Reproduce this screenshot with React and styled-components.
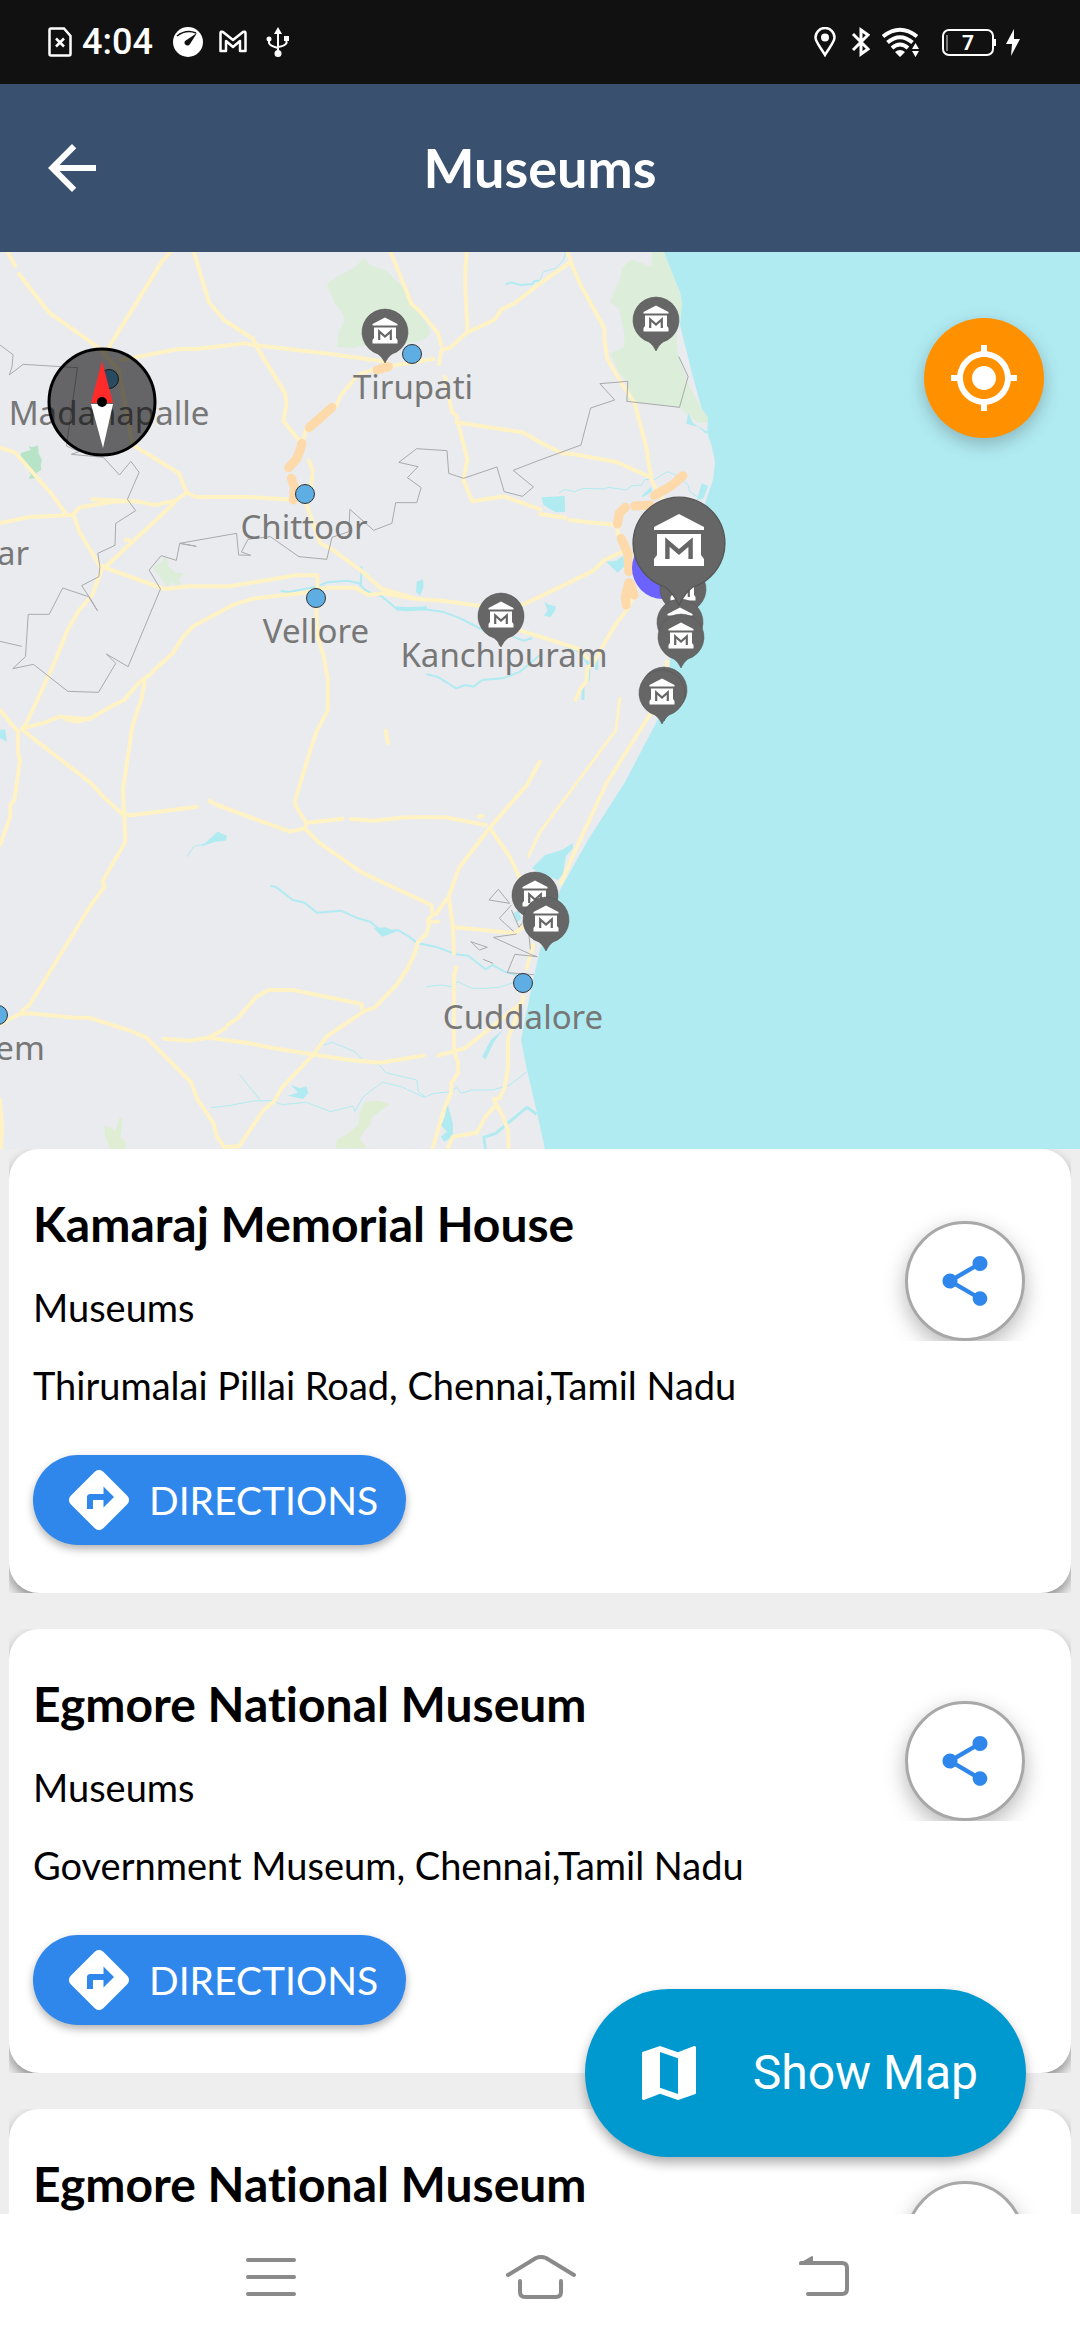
import React from "react";
import styled, { createGlobalStyle } from "styled-components";
import { MdArrowBack, MdDirections, MdMap, MdMyLocation, MdShare } from "react-icons/md";

const GlobalStyle = createGlobalStyle`
  * { box-sizing: border-box; }
  body { margin: 0; background: #eeeeee; }
  h1, h2, p, ul { margin: 0; padding: 0; }
  button { border: 0; margin: 0; padding: 0; font: inherit; cursor: pointer; }
  svg { display: block; flex: none; }
`;

const Screen = styled.div`
  display: flex;
  flex-direction: column;
  height: 100vh;
  color: #000;
  font-family: Lato, "Open Sans", sans-serif;
  font-variant-ligatures: none;
`;

const StatusBar = styled.div`
  display: flex;
  flex: none;
  align-items: center;
  justify-content: space-between;
  height: 84px;
  padding: 0 60px 0 48px;
  background: #111111;
  color: #fff;
`;

const StatusGroup = styled.div`
  display: flex;
  align-items: center;
  gap: ${(p) => p.$gap}px;
`;

const Clock = styled.span`
  font-family: Roboto, sans-serif;
  font-size: 36px;
  font-weight: 500;
  line-height: 44px;
`;

const AppBar = styled.header`
  display: grid;
  flex: none;
  grid-template-columns: 144px 1fr 144px;
  align-items: center;
  height: 168px;
  background: #39516f;
  color: #fff;
`;

const BackButton = styled.button`
  display: flex;
  align-items: center;
  height: 144px;
  padding-left: 36px;
  background: none;
  color: inherit;
`;

const AppTitle = styled.h1`
  font-size: 54px;
  font-weight: 700;
  line-height: 66px;
  text-align: center;
`;

const Content = styled.main`
  position: relative;
  display: flex;
  flex: 1;
  flex-direction: column;
  min-height: 0;
  overflow: hidden;
`;

const MapPane = styled.section`
  position: relative;
  flex: none;
  height: 897px;
  background: #e9ebee;
`;

const MapCanvas = styled.svg`
  width: 100%;
  height: 100%;
`;

const Shape = styled.path`
  fill: ${(p) => p.$fill || "none"};
  stroke: ${(p) => p.$stroke || "none"};
  stroke-width: ${(p) => p.$width || 0}px;
  stroke-linejoin: round;
  stroke-linecap: ${(p) => p.$cap || "butt"};
  vector-effect: non-scaling-stroke;
`;

const CityName = styled.text`
  fill: #777777;
  font-family: "Noto Sans", "Open Sans", sans-serif;
  font-size: 33px;
  text-anchor: middle;
`;

const LocateButton = styled.button`
  position: absolute;
  top: 66px;
  right: 36px;
  display: flex;
  align-items: center;
  justify-content: center;
  width: 120px;
  height: 120px;
  border-radius: 50%;
  background: #ff9100;
  color: #fff;
  box-shadow: 0 6px 18px rgba(0, 0, 0, 0.24);
`;

const PlaceList = styled.ul`
  display: flex;
  flex: none;
  flex-direction: column;
  gap: 36px;
  padding: 0 9px;
  list-style: none;
`;

const PlaceItem = styled.li`
  overflow: hidden;
`;

const Card = styled.article`
  display: flex;
  align-items: flex-start;
  justify-content: space-between;
  padding: 46px 22px 48px 24px;
  border-radius: 30px;
  background: #fff;
  box-shadow: 0 6px 12px rgba(0, 0, 0, 0.4);
`;

const CardBody = styled.div`
  display: flex;
  flex-direction: column;
  align-items: flex-start;
  gap: 30px;
`;

const PlaceName = styled.h2`
  font-size: 48px;
  font-weight: 700;
  line-height: 58px;
`;

const PlaceText = styled.p`
  font-size: 38px;
  line-height: 48px;
`;

const DirectionsButton = styled.button`
  display: flex;
  align-items: center;
  gap: 14px;
  height: 90px;
  margin-top: 16px;
  padding: 0 28px 0 30px;
  border-radius: 45px;
  background: #2f87ec;
  color: #fff;
  font-size: 39px;
  line-height: 48px;
  box-shadow: 0 4px 9px rgba(0, 0, 0, 0.3);
`;

const ShareArea = styled.div`
  padding: 26px 24px 0;
  overflow: hidden;
`;

const ShareButton = styled.button`
  display: flex;
  align-items: center;
  justify-content: center;
  width: 120px;
  height: 120px;
  border: 3px solid #a8a8a8;
  border-radius: 50%;
  background: #fff;
  color: #2f87ec;
  box-shadow: 0 8px 21px rgba(0, 0, 0, 0.28);
`;

const ShowMapButton = styled.button`
  position: absolute;
  right: 54px;
  bottom: 57px;
  display: flex;
  align-items: center;
  gap: 48px;
  height: 168px;
  padding: 0 48px;
  border-radius: 84px;
  background: #0099cf;
  color: #fff;
  font-family: Roboto, sans-serif;
  font-size: 48px;
  line-height: 56px;
  box-shadow: 0 6px 12px rgba(0, 0, 0, 0.32);
`;

const NavBar = styled.nav`
  display: grid;
  flex: none;
  grid-template-columns: repeat(3, 1fr);
  height: 126px;
  padding: 0 12.5%;
  background: #fff;
`;

const NavButton = styled.button`
  display: flex;
  align-items: center;
  justify-content: center;
  background: none;
`;

const roadsNorth = [
  "M20 0L44 48M55 72L143 188L285 292L345 360L385 585L520 670L542 728L570 741H725L855 750",
  "M495 6L470 35L312 298L300 310",
  "M350 330L520 297H568L715 280",
  "M563 6L607 157L650 210L735 267L745 290L828 430L832 462L823 513L872 575",
  "M722 283L960 312L1120 335",
  "M1050 370L1120 350L1258 327M1040 375L990 435L975 470M1130 0L1140 20L1195 162L1225 190L1272 250L1281 285",
  "M1568 100L1494 160L1457 178L1435 210L1355 248L1308 292L1282 300L1275 342M1355 6L1350 90L1358 248",
  "M1292 380L1312 485L1325 497L1357 628L1346 690L1371 754L1463 739L1568 778M1325 517L1517 547L1568 577",
  "M0 593L44 608L140 720M145 725L190 790M0 819L85 801L210 795L232 772L330 755L390 753L450 765L510 752L542 728M268 748L360 752",
  "M213 795L232 848L290 948L306 951L505 760",
  "M365 870H375M300 951L477 1017L548 1009H665L860 976H922V1013M298 950L268 1035L230 1080L200 1133M196 1140L155 1245L108 1350",
  "M360 1350L404 1297L440 1270M445 1262L503 1208L530 1163L562 1128L680 1063L735 1046L875 1030L950 1013H1030L1070 1035L1110 1030L1210 1047",
  "M410 1350L420 1295M897 632L908 662M907 672L900 740M885 750L930 880L960 895L1050 963L1106 1015L1210 1047L1285 1052L1395 1068M1515 1065L1568 1040M1510 1142L1568 1160",
  "M918 1065L922 1160L940 1220L952 1285V1350M880 575L888 540",
];

const roadsCoast = [
  "M80 6L93 45L115 100L187 235V258M186 265L196 328L237 400L275 460L313 610M312 617L324 690L345 735L355 745M0 100L87 38",
  "M0 577L63 610L95 612L222 636L322 682M0 792L73 803M85 810L130 815M138 817L195 822L225 825V850L235 870",
  "M0 1040L155 962L187 930L240 905M268 1045L255 1075L215 1130L170 1210L155 1240L137 1255L135 1295L118 1315L103 1350M0 1160L112 1197L137 1225",
];

const roadsSouth = [
  "M0 30L52 95V155L58 180L42 300L30 315V350L0 435M108 0L75 72L63 86L130 68L172 50L258 58L330 15L362 0M190 58L228 65L258 55",
  "M63 88L265 250L300 290L355 342L382 346L572 320M410 0L385 75L357 268L364 425L298 543L303 560L262 618L85 915L65 933",
  "M0 972L55 943L85 940L215 953H258L372 990M380 993L425 1013L555 1147L572 1195L620 1270L630 1310L652 1342L695 1338L765 1230L797 1203L818 1163L910 1063L950 1008L1060 932L1088 923L1155 850L1185 802L1205 758L1213 727L1238 702L1246 675",
  "M608 302L630 315L842 395L885 385L890 368L995 356M1018 357L1085 362L1180 352H1293L1410 375M890 370L857 315V300L897 165L918 98L952 30V0M885 385L925 427L1050 517L1252 615L1257 645L1243 657V672",
  "M1568 185L1530 255L1423 382L1332 505L1303 590L1266 642M1423 385L1480 470L1510 535M1303 590L1315 680L1318 760M1315 681L1495 700L1520 680M1252 665H1272",
  "M1548 735L1530 805M1520 890L1515 910L1475 1015V1105L1465 1165L1450 1195L1435 1197L1440 1215L1410 1250L1385 1298L1315 1310L1298 1350M1440 1210L1458 1245M1460 1248L1475 1290L1477 1350",
  "M1325 802L1318 830V1050L1325 1075M1330 1083V1120L1310 1150V1178L1290 1225L1255 1350M1515 908L1350 1045L1273 1066M1230 1067L1103 1088L1015 1080L905 1063L780 1042L725 1030L605 1013L550 1022L475 1016M605 1013L655 985M660 975L690 955L745 890L780 870H850L1050 912V925",
  "M1120 92L1127 130M1390 350L1402 348M0 1200L6 1290L3 1350",
];

const highways = [
  "M1095 360L1128 350",
  "M964 472L898 533",
  "M877 580L870 605L860 628L838 653",
  "M846 685L855 712L852 750",
];

const cityHighways = [
  "M415 677L385 705L332 737",
  "M320 765L275 768M248 772L230 790L225 822",
  "M236 865L255 910L258 965",
  "M258 998L248 1040L250 1065M262 1000L273 1035",
];

const borders = [
  "M0 285L38 314L35 350L27 375L67 343L225 353L193 588L230 605L207 613L300 622L347 675L380 634L404 667L370 748L394 782L336 820L334 886L284 910L290 950L287 980L237 1007L262 1045L283 1082L257 1040L182 1014L143 1093H82L74 1220L37 1256L97 1243L197 1324L286 1327L336 1240L309 1212L372 1250L466 1017L433 960L468 917L512 931L522 880L570 889L522 880L687 850L693 915L728 916L701 906L720 868L785 860L868 920L949 928L964 862L1013 845L1016 778L1085 841L1138 820L1149 758H1210L1223 713L1183 683L1214 650L1158 637L1210 596L1298 602L1303 670L1346 685L1443 651L1464 725L1517 739L1549 711L1490 661L1568 630",
  "M0 1174L63 1189",
];

const rivers = [
  "M1468 103L1485 97L1510 105L1545 102L1552 93L1568 92M815 1023L840 1026L880 1018L920 1010L950 997L1010 992L1042 1000L1060 1020L1080 1030L1110 1040L1150 1075L1210 1075L1285 1085L1330 1102L1375 1125L1420 1150M1490 1160L1520 1172L1545 1165M1050 950L1047 1010M1238 1273L1270 1280L1325 1315L1350 1305L1375 1310L1400 1290L1460 1285L1510 1265L1568 1215",
];

const riversSouth = [
  "M785 558L800 560L850 600L885 608L920 638L990 632L1040 655L1075 665L1110 695L1155 690L1185 708L1213 730L1265 740L1325 763L1360 767L1410 808L1430 795L1465 815L1500 825",
  "M1238 860L1280 855L1310 860L1330 845L1370 865L1410 865L1450 862L1490 848",
  "M612 1223L665 1217L735 1203L790 1202L820 1214L890 1207L960 1235L1025 1218L1030 1235L1055 1190L1110 1147L1165 1160L1232 1192L1260 1180L1310 1175L1325 1162L1340 1180L1370 1170L1430 1170L1480 1155L1530 1115",
  "M695 1123L755 1200M940 1035L965 1027L1030 1055L1060 1085L1100 1093L1120 1118L1210 1140L1215 1175L1235 1190M543 470L562 440L600 430L640 405",
  "M1410 1350L1405 1312L1440 1300L1480 1265L1530 1222L1558 1243",
];

const cities = [
  { x: 412, y: 102 },
  { x: 305, y: 242 },
  { x: 316, y: 346 },
  { x: 109, y: 127 },
  { x: -2, y: 763 },
  { x: 523, y: 731 },
];

const cityNames = [
  { name: "Tirupati", x: 413, y: 147 },
  { name: "Madanapalle", x: 109, y: 173 },
  { name: "Chittoor", x: 304, y: 287 },
  { name: "Vellore", x: 316, y: 391 },
  { name: "Kanchipuram", x: 504, y: 415 },
  { name: "Cuddalore", x: 523, y: 777 },
  { name: "ar", x: 13, y: 313 },
  { name: "em", x: 20, y: 808 },
];

const pins = [
  { x: 385, y: 80 },
  { x: 656, y: 68 },
  { x: 501, y: 364 },
  { x: 683, y: 337 },
  { x: 680, y: 370 },
  { x: 681, y: 385 },
  { x: 664, y: 438 },
  { x: 662, y: 441 },
  { x: 535, y: 643 },
  { x: 546, y: 668 },
  { x: 679, y: 291, size: 2 },
];

function MuseumPin({ x, y, size = 1 }) {
  return (
    <g transform={`translate(${x} ${y}) scale(${size})`}>
      <path
        d="M-7 22C-4 24 -2 27 0 31C2 27 4 24 7 22A23 23 0 1 0 -7 22Z"
        fill="#666666"
        stroke="#555555"
        strokeWidth=".6"
      />
      <path d="M0 -14.500L12.500 -8V-6.500H-12.500V-8Z" fill="#fff" />
      <path d="M-11 -4.500H11V6L12.500 8V11.500H-12.500V8L-11 6Z" fill="#fff" />
      <path d="M-5.800 8V-.5L0 4.500L5.800 -.5V8" fill="none" stroke="#666666" strokeWidth="2.200" />
    </g>
  );
}

function Compass() {
  return (
    <g transform="translate(102 150)">
      <circle r="53" fill="#000" fillOpacity=".57" stroke="#000" strokeWidth="3" />
      <path d="M0 -41L11 1H-11Z" fill="#ff2a2a" />
      <path d="M-11 2H11L1 46Z" fill="#fff" />
      <circle r="5" />
    </g>
  );
}

const RoadSet = ({ lines, transform }) => (
  <g transform={transform}>
    {lines.map((d) => (
      <Shape key={d} d={d} $stroke="#fff2c5" $width={4} $cap="round" />
    ))}
  </g>
);

function RegionMap() {
  const north = "translate(0 -2) scale(.34438 .33333)";
  const coast = "translate(540 -2) scale(.34438 .33333)";
  const south = "translate(0 448) scale(.34438 .33333)";
  return (
    <MapCanvas viewBox="0 0 1080 897" preserveAspectRatio="xMinYMin slice" role="img" aria-label="Map of museums">
      <path
        d="M663 0L680 40L682 51L680 73L692 121L702 158L708 170L707 180L712 195L715 210L713 228L705 251L690 300L686 370L675 395L670 408L669 440L656 471L625 530L588 588L560 638L540 698L533 728L527 758L521 788L527 818L537 861L545 897H1080V0Z"
        fill="#b1ebf2"
      />
      <g transform={north}>
        <Shape
          $fill="#dceeda"
          d="M1060 22L1070 42L1122 63L1180 122L1200 165L1245 230L1250 250L1235 268L1190 280L1115 285L1045 288L1028 295L978 290L985 240L998 220V195L970 155L950 108L955 95L1035 48Z"
        />
        <Shape
          $fill="#b7e4c7"
          d="M82 588L95 592L110 586L112 610L122 630L118 645L120 660L107 668L102 685L82 686L90 675L80 655L58 628L62 608L90 600Z"
        />
        <Shape
          $fill="#dceeda"
          d="M474 920L485 925L490 948L510 968L537 970L518 987L526 1003L510 1005L500 998L483 1010L468 985L442 952L470 935Z"
        />
        <Shape $fill="#b1ebf2" d="M1210 995L1228 988L1230 1010L1220 1038L1208 1025Z" />
        {rivers.map((d) => (
          <Shape key={d} d={d} $stroke="#b1ebf2" $width={2} />
        ))}
        <Shape d="M1150 1075L1180 1078L1240 1075" $stroke="#b1ebf2" $width={4} />
      </g>
      <g transform={coast}>
        <Shape
          $fill="#dceeda"
          d="M325 6H360L405 125L413 160L405 220L396 240L400 310L425 390L465 470L487 500V518H460L430 495L405 472L252 452L255 395L230 370L205 310L245 290V255L230 175L203 157L235 80L237 55L265 28L325 50Z"
        />
        <Shape
          $fill="#b1ebf2"
          d="M5 742L30 740L72 738L73 785L45 787L10 765ZM192 935L222 932L240 918L250 945L225 968ZM12 1055L28 1065L45 1068V1080L30 1102L12 1097L22 1080ZM293 740L323 710L325 725L300 740ZM430 490L445 520L485 545L482 552L460 530L425 522ZM470 700L488 708L475 745L455 750Z"
        />
        <Shape
          $stroke="#b1ebf2"
          $width={1}
          d="M55 730L70 718L100 725L125 715L185 717L200 712L250 720L265 708L295 705L305 688L330 690L370 665L395 675L430 705L435 725L470 750M74 6L68 30L45 55L10 65L0 90"
        />
        <Shape $stroke="#b1ebf2" $width={3} d="M70 1185L118 1205L142 1245L140 1290L125 1310V1350M165 1215V1260" />
      </g>
      <g transform={south}>
        <Shape
          $fill="#dfeed3"
          d="M303 1278L320 1282L335 1293L348 1252L356 1255L350 1310L368 1330L362 1350H320L305 1305ZM1060 1205L1100 1202L1132 1212L1110 1230L1080 1250L1075 1275L1060 1290L1045 1315L1065 1345H975L978 1320L1010 1300L1040 1275L1045 1235Z"
        />
        <Shape
          $fill="#b1ebf2"
          d="M600 425L632 395L660 408L655 422L625 425L582 440ZM0 90L15 88L20 125L0 115ZM845 1155L870 1165L890 1158L895 1180L880 1197L835 1187L865 1178ZM1298 1205L1315 1270V1310L1290 1325L1280 1310L1298 1295L1280 1275L1292 1250ZM1460 990L1435 1025L1410 1078L1400 1070L1425 1020ZM1085 685L1120 682L1150 695L1110 710ZM1490 640L1505 632L1515 655L1500 668Z"
        />
        {riversSouth.map((d, i) => (
          <Shape key={d} d={d} $stroke="#b1ebf2" $width={i === 4 ? 3 : i === 0 ? 2 : 1} />
        ))}
      </g>
      <path d="M532 616L545 603L562 598L573 591V596L566 604L563 622L558 628L540 622Z" fill="#b1ebf2" />
      <RoadSet lines={roadsNorth} transform={north} />
      <RoadSet lines={roadsCoast} transform={coast} />
      <RoadSet lines={roadsSouth} transform={south} />
      <Shape d="M667 408L665 440L640 478L618 513L607 530L580 588L560 633" $stroke="#fff2c5" $width={4} />
      <Shape d="M620 445L616 478L540 580L528 605" $stroke="#fff2c5" $width={3} />
      <g transform={north}>
        {borders.map((d) => (
          <Shape key={d} d={d} $stroke="#a9aaac" $width={1} />
        ))}
        {highways.map((d) => (
          <Shape key={d} d={d} $stroke="#fed9a9" $width={9} $cap="round" />
        ))}
      </g>
      <g transform={coast}>
        <Shape
          d="M0 630L119 585L147 474L217 450L174 401L255 394L252 454L405 472L430 380L403 320"
          $stroke="#a9aaac"
          $width={1}
        />
        {cityHighways.map((d) => (
          <Shape key={d} d={d} $stroke="#fed9a9" $width={9} $cap="round" />
        ))}
      </g>
      <g transform={south}>
        <Shape
          d="M1447 568L1420 600L1480 610ZM1485 615L1450 655L1492 695M1485 630L1507 682L1515 670M1500 702L1433 712L1545 765L1560 770L1495 763L1473 818L1550 824M1540 748L1535 695M1367 725L1415 742L1392 750ZM1403 778L1432 790"
          $stroke="#a9aaac"
          $width={1}
        />
      </g>
      {cities.map((c) => (
        <circle key={`${c.x}-${c.y}`} cx={c.x} cy={c.y} r="9.500" fill="#5eaee3" stroke="#333" />
      ))}
      {cityNames.map((c) => (
        <CityName key={c.name} x={c.x} y={c.y}>
          {c.name}
        </CityName>
      ))}
      <circle cx="663" cy="316" r="31" fill="#6c63ff" />
      {pins.map((p) => (
        <MuseumPin key={`${p.x}-${p.y}`} {...p} />
      ))}
      <Compass />
    </MapCanvas>
  );
}

const SimIcon = () => (
  <svg width="24" height="30" viewBox="0 0 24 30" fill="none" stroke="#fff" strokeWidth="2.500">
    <path d="M3 1.500H16L22.500 9V27Q22.500 28.500 21 28.500H3Q1.500 28.500 1.500 27V3Q1.500 1.500 3 1.500Z" />
    <path d="M8 11.500L16 19.500M16 11.500L8 19.500" />
  </svg>
);

const GaugeIcon = () => (
  <svg width="34" height="30" viewBox="0 0 34 30">
    <circle cx="19" cy="15" r="15" fill="#fff" />
    <path d="M8 9Q17 2 27 6" fill="none" stroke="#111" strokeWidth="1.500" />
    <path d="M28 6L21 17A2.500 2.500 0 0 1 16 14Z" fill="#111" />
  </svg>
);

const MailIcon = () => (
  <svg width="28" height="30" viewBox="0 0 28 30" fill="none" stroke="#fff" strokeWidth="2.500">
    <path d="M1.500 6Q1.500 4 4 5L14 13L24 5Q26.500 4 26.500 6V24H21V14L14 20L7 14V24H1.500Z" strokeLinejoin="round" />
  </svg>
);

const UsbIcon = () => (
  <svg width="28" height="30" viewBox="0 0 28 30" fill="#fff">
    <path d="M15 0L19 7H11Z" />
    <circle cx="15" cy="26.500" r="3.500" />
    <circle cx="6" cy="12" r="2.500" />
    <path d="M21 9H26V14H21Z" />
    <path d="M15 6V26M6 12V16Q7 19 15 21M23.500 12V16Q22 19 15 20" fill="none" stroke="#fff" strokeWidth="2" />
  </svg>
);

const PinIcon = () => (
  <svg width="24" height="30" viewBox="0 0 24 30" fill="#fff">
    <path
      d="M13 28C9 21 3.500 15 3.500 10.500A9.500 9.500 0 0 1 22.500 10.500C22.500 15 17 21 13 28Z"
      fill="none"
      stroke="#fff"
      strokeWidth="2.500"
    />
    <circle cx="13" cy="10.500" r="4" />
  </svg>
);

const BluetoothIcon = () => (
  <svg width="22" height="30" viewBox="0 0 22 30" fill="none" stroke="#fff" strokeWidth="3">
    <path d="M5 7L20 22L13 27V3L20 8L5 23" />
  </svg>
);

const WifiIcon = () => (
  <svg width="48" height="30" viewBox="0 0 48 30" fill="none" stroke="#fff" strokeWidth="4">
    <path d="M1 9.500Q18 -4 35 9.500M5.500 15.500Q18 5 30.500 15.500M10 21Q18 14 26 21" />
    <path d="M13 25Q18 21 23 25L18 30ZM30 22L33.500 16L37 22ZM30 24L33.500 30L37 24Z" fill="#fff" stroke="none" />
  </svg>
);

const BatteryIcon = () => (
  <svg width="78" height="30" viewBox="0 0 78 30" fill="none">
    <rect x="1" y="3" width="50" height="25" rx="6" stroke="#fff" strokeWidth="2" />
    <path d="M53 12V19" stroke="#fff" strokeWidth="2" />
    <path d="M5 8V24" stroke="#777" strokeWidth="2" />
    <text x="26" y="23" fill="#fff" fontFamily="Roboto, sans-serif" fontSize="21" fontWeight="700" textAnchor="middle">
      7
    </text>
    <path d="M72 2L64 17H70L69 29L78 12H72Z" fill="#fff" />
  </svg>
);

const navStroke = { fill: "none", stroke: "#8a8a8a", strokeWidth: 4, strokeLinecap: "round", strokeLinejoin: "round" };

const MenuIcon = () => (
  <svg width="80" height="44" viewBox="0 0 80 44" {...navStroke}>
    <path d="M18 5H64M18 22H64M18 39H64" />
  </svg>
);

const HomeIcon = () => (
  <svg width="80" height="44" viewBox="0 0 80 44" {...navStroke}>
    <path d="M8 20L36 3Q41 1 46 3L74 20M20 26V37Q20 42 25 42H56Q61 42 61 37V26" />
  </svg>
);

const ReturnIcon = () => (
  <svg width="80" height="44" viewBox="0 0 80 44" {...navStroke}>
    <path d="M31 8H72Q77 8 77 13V34Q77 39 72 39H38" />
    <path d="M30 9L42 2V9Z" fill="#8a8a8a" strokeWidth="2" />
  </svg>
);

const places = [
  { id: 1, name: "Kamaraj Memorial House", kind: "Museums", address: "Thirumalai Pillai Road, Chennai,Tamil Nadu" },
  { id: 2, name: "Egmore National Museum", kind: "Museums", address: "Government Museum, Chennai,Tamil Nadu" },
  { id: 3, name: "Egmore National Museum", kind: "Museums", address: "Government Museum, Chennai,Tamil Nadu" },
];

function PlaceCard({ place }) {
  return (
    <PlaceItem>
      <Card>
        <CardBody>
          <PlaceName>{place.name}</PlaceName>
          <PlaceText>{place.kind}</PlaceText>
          <PlaceText>{place.address}</PlaceText>
          <DirectionsButton type="button">
            <MdDirections size={72} />
            DIRECTIONS
          </DirectionsButton>
        </CardBody>
        <ShareArea>
          <ShareButton type="button" aria-label={`Share ${place.name}`}>
            <MdShare size={60} />
          </ShareButton>
        </ShareArea>
      </Card>
    </PlaceItem>
  );
}

export default function App() {
  return (
    <Screen>
      <GlobalStyle />
      <StatusBar>
        <StatusGroup $gap={16}>
          <StatusGroup $gap={10}>
            <SimIcon />
            <Clock>4:04</Clock>
          </StatusGroup>
          <GaugeIcon />
          <MailIcon />
          <UsbIcon />
        </StatusGroup>
        <StatusGroup $gap={12}>
          <PinIcon />
          <BluetoothIcon />
          <WifiIcon />
          <BatteryIcon />
        </StatusGroup>
      </StatusBar>
      <AppBar>
        <BackButton type="button" aria-label="Back">
          <MdArrowBack size={72} />
        </BackButton>
        <AppTitle>Museums</AppTitle>
      </AppBar>
      <Content>
        <MapPane>
          <RegionMap />
          <LocateButton type="button" aria-label="My location">
            <MdMyLocation size={72} />
          </LocateButton>
        </MapPane>
        <PlaceList>
          {places.map((p) => (
            <PlaceCard key={p.id} place={p} />
          ))}
        </PlaceList>
        <ShowMapButton type="button">
          <MdMap size={72} />
          Show Map
        </ShowMapButton>
      </Content>
      <NavBar>
        <NavButton type="button" aria-label="Recent apps">
          <MenuIcon />
        </NavButton>
        <NavButton type="button" aria-label="Home">
          <HomeIcon />
        </NavButton>
        <NavButton type="button" aria-label="Return">
          <ReturnIcon />
        </NavButton>
      </NavBar>
    </Screen>
  );
}
